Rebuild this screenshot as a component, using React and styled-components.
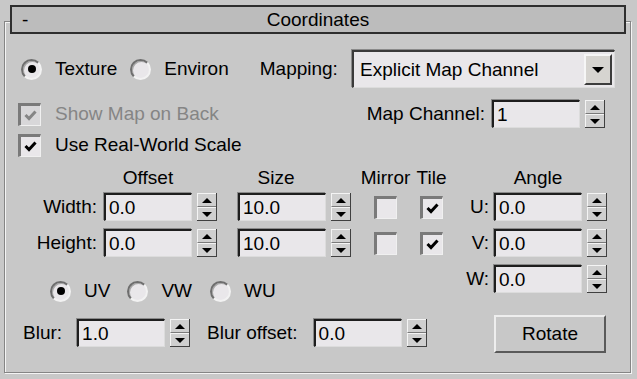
import React from 'react';
import styled, { createGlobalStyle } from 'styled-components';

const GlobalStyle = createGlobalStyle`
  html, body {
    margin: 0;
    padding: 0;
    background: #c8c8c8;
  }
  body {
    font-family: "Liberation Sans", Arial, sans-serif;
    font-size: 19px;
    color: #000;
  }
  * { box-sizing: border-box; }
`;

const Page = styled.div`
  width: 637px;
  height: 379px;
  padding: 21px 0 0 4px;
  background: #c8c8c8;
`;

const Group = styled.div`
  width: 627px;
  height: 352px;
  border: 1px solid #858585;
  box-shadow: inset 1px 1px 0 #f4f4f4, 1px 1px 0 #f4f4f4;
`;

const TitleBar = styled.div`
  display: grid;
  grid-template-columns: 1fr auto 1fr;
  align-items: center;
  height: 29px;
  margin: -17px 4px 0 5px;
  background: #bcbcbc;
  border: 2px solid #2e2e2e;
  line-height: 22px;
`;

const Collapse = styled.span`
  padding-left: 10px;
`;

const Content = styled.div`
  padding: 16px 0 0 13px;
`;

const Row = styled.div`
  display: flex;
  align-items: center;
  height: ${p => p.$h || 28}px;
  margin-top: ${p => p.$mt || 0}px;
  padding-left: ${p => p.$pl || 0}px;
  padding-right: ${p => p.$pr || 0}px;
`;

const Text = styled.span`
  line-height: 22px;
  white-space: nowrap;
  margin-left: ${p => p.$ml || 0}px;
  color: ${p => (p.$disabled ? '#858585' : '#000')};
`;

const Option = styled.label`
  display: flex;
  align-items: center;
  gap: 13px;
  margin-left: ${p => p.$ml || 0}px;
`;

const RadioCircle = styled.span`
  position: relative;
  width: 21px;
  height: 21px;
  border-radius: 50%;
  background: #e9e7ea;
  border: 2px solid;
  border-color: #6e6e6e #f2f2f2 #f2f2f2 #6e6e6e;
  box-shadow: inset 1px 1px 0 #a8a8a8;
  &::after {
    content: '';
    display: ${p => (p.$on ? 'block' : 'none')};
    position: absolute;
    left: 4.5px;
    top: 4.5px;
    width: 8px;
    height: 8px;
    border-radius: 50%;
    background: #000;
  }
`;

const Box = styled.span`
  display: flex;
  align-items: center;
  justify-content: center;
  width: 23px;
  height: 23px;
  flex: none;
  background: ${p => (p.$disabled ? '#d8d7d9' : '#e9e7ea')};
  border-style: solid;
  border-width: 3px 1px 1px 3px;
  border-color: #7a7a7a #f0f0f0 #f0f0f0 #7a7a7a;
`;

const Check = ({ color = '#000' }) => (
  <svg width="13" height="11" viewBox="0 0 13 11">
    <path d="M1.5 5 L5 8.5 L11.5 1.5" fill="none" stroke={color} strokeWidth="3" />
  </svg>
);

const CheckBox = ({ checked, disabled }) => (
  <Box $disabled={disabled}>{checked && <Check color={disabled ? '#858585' : '#000'} />}</Box>
);

const Input = styled.span`
  display: flex;
  align-items: center;
  width: ${p => p.$w || 88}px;
  height: 28px;
  padding-left: 3px;
  background: #e9e7ea;
  border-style: solid;
  border-width: 2px 1px 1px 2px;
  border-color: #1e1e1e #dcdcdc #dcdcdc #1e1e1e;
  box-shadow: -1px -1px 0 #8a8a8a;
  line-height: 22px;
`;

const Spinner = styled.span`
  display: flex;
  flex-direction: column;
  width: 20px;
  height: 28px;
  margin-left: 5px;
  border-right: 1px solid #404040;
  border-bottom: 1px solid #404040;
`;

const SpinHalf = styled.span`
  flex: 1;
  display: flex;
  align-items: center;
  justify-content: center;
  background: #cfcfcf;
  border-top: 1px solid #f4f4f4;
  border-left: 1px solid #f4f4f4;
  border-bottom: ${p => (p.$down ? '0' : '1px solid #7a7a7a')};
  &::after {
    content: '';
    border-left: 5px solid transparent;
    border-right: 5px solid transparent;
    ${p => (p.$down ? 'border-top: 5px solid #000;' : 'border-bottom: 5px solid #000;')}
  }
`;

const FieldWrap = styled.span`
  display: flex;
  align-items: center;
  margin-left: ${p => p.$ml || 0}px;
`;

const Field = ({ value, ml }) => (
  <FieldWrap $ml={ml}>
    <Input>{value}</Input>
    <Spinner>
      <SpinHalf />
      <SpinHalf $down />
    </Spinner>
  </FieldWrap>
);

const Dropdown = styled.div`
  display: flex;
  align-items: center;
  justify-content: space-between;
  width: 263px;
  height: 38px;
  margin-left: auto;
  padding-left: 6px;
  padding-right: 2px;
  background: #e9e7ea;
  border-style: solid;
  border-width: 2px 1px 1px 2px;
  border-color: #3a3a3a #dcdcdc #dcdcdc #3a3a3a;
  box-shadow: -1px -1px 0 #8a8a8a;
  line-height: 22px;
  white-space: nowrap;
`;

const DropButton = styled.span`
  display: flex;
  align-items: center;
  justify-content: center;
  width: 28px;
  height: 31px;
  background: #d6d4d0;
  border: 2px solid;
  border-color: #f6f6f6 #3c3c3c #3c3c3c #f6f6f6;
  &::after {
    content: '';
    border-left: 6px solid transparent;
    border-right: 6px solid transparent;
    border-top: 6px solid #000;
  }
`;

const RightGroup = styled.div`
  display: flex;
  align-items: center;
  margin-left: auto;
`;

const Lower = styled.div`
  display: flex;
  margin-top: 10px;
`;

const LeftBlock = styled.div`
  display: flex;
  flex-direction: column;
`;

const columns = `
  display: grid;
  grid-template-columns: 86px 134px 136px 46px 23px;
  align-items: center;
`;

const HeaderGrid = styled.div`
  ${columns}
  height: 22px;
`;

const FieldGrid = styled.div`
  ${columns}
  grid-auto-rows: 28px;
  row-gap: 8px;
  margin-top: 4px;
`;

const HeaderCell = styled.span`
  display: flex;
  justify-content: center;
  width: ${p => p.$w || 88}px;
  line-height: 22px;
  white-space: nowrap;
`;

const RowLabel = styled.span`
  text-align: right;
  padding-right: ${p => p.$pr || 7}px;
  line-height: 22px;
`;

const RightBlock = styled.div`
  display: flex;
  flex-direction: column;
  margin-left: 16px;
`;

const AngleHeader = styled.div`
  display: flex;
  height: 22px;
  padding-left: 35px;
`;

const AngleGrid = styled.div`
  display: grid;
  grid-template-columns: 35px auto;
  grid-auto-rows: 28px;
  row-gap: 8px;
  align-items: center;
  margin-top: 4px;
`;

const Button = styled.div`
  display: flex;
  align-items: center;
  justify-content: center;
  width: 112px;
  height: 38px;
  margin: 22px 0 0 35px;
  background: #c8c8c8;
  border: 2px solid;
  border-color: #eeeeee #5a5a5a #5a5a5a #eeeeee;
  line-height: 22px;
`;

const Radio = ({ on, label, ml }) => (
  <Option $ml={ml}>
    <RadioCircle $on={on} />
    <Text>{label}</Text>
  </Option>
);

export default function App() {
  return (
    <>
      <GlobalStyle />
      <Page>
        <Group>
          <TitleBar>
            <Collapse>-</Collapse>
            <span>Coordinates</span>
            <span />
          </TitleBar>
          <Content>
            <Row $h={38} $pl={3} $pr={15}>
              <Radio on label="Texture" />
              <Radio label="Environ" ml={13} />
              <Text $ml={31}>Mapping:</Text>
              <Dropdown>
                <span>Explicit Map Channel</span>
                <DropButton />
              </Dropdown>
            </Row>
            <Row $mt={12} $pr={25}>
              <CheckBox checked disabled />
              <Text $ml={14} $disabled>Show Map on Back</Text>
              <RightGroup>
                <Text>Map Channel:</Text>
                <Field value="1" ml={7} />
              </RightGroup>
            </Row>
            <Row $h={24} $mt={5}>
              <CheckBox checked />
              <Text $ml={14}>Use Real-World Scale</Text>
            </Row>
            <Lower>
              <LeftBlock>
                <HeaderGrid>
                  <span />
                  <HeaderCell>Offset</HeaderCell>
                  <HeaderCell $w={76}>Size</HeaderCell>
                  <HeaderCell $w={23}>Mirror</HeaderCell>
                  <HeaderCell $w={23}>Tile</HeaderCell>
                </HeaderGrid>
                <FieldGrid>
                  <RowLabel>Width:</RowLabel>
                  <Field value="0.0" />
                  <Field value="10.0" />
                  <CheckBox />
                  <CheckBox checked />
                  <RowLabel>Height:</RowLabel>
                  <Field value="0.0" />
                  <Field value="10.0" />
                  <CheckBox />
                  <CheckBox checked />
                </FieldGrid>
                <Row $h={22} $mt={23} $pl={32}>
                  <Radio on label="UV" />
                  <Radio label="VW" ml={17} />
                  <Radio label="WU" ml={18} />
                </Row>
                <Row $h={30} $mt={16} $pl={5}>
                  <Text>Blur:</Text>
                  <Field value="1.0" ml={15} />
                  <Text $ml={17}>Blur offset:</Text>
                  <Field value="0.0" ml={16} />
                </Row>
              </LeftBlock>
              <RightBlock>
                <AngleHeader>
                  <HeaderCell>Angle</HeaderCell>
                </AngleHeader>
                <AngleGrid>
                  <RowLabel $pr={5}>U:</RowLabel>
                  <Field value="0.0" />
                  <RowLabel $pr={5}>V:</RowLabel>
                  <Field value="0.0" />
                  <RowLabel $pr={5}>W:</RowLabel>
                  <Field value="0.0" />
                </AngleGrid>
                <Button>Rotate</Button>
              </RightBlock>
            </Lower>
          </Content>
        </Group>
      </Page>
    </>
  );
}
